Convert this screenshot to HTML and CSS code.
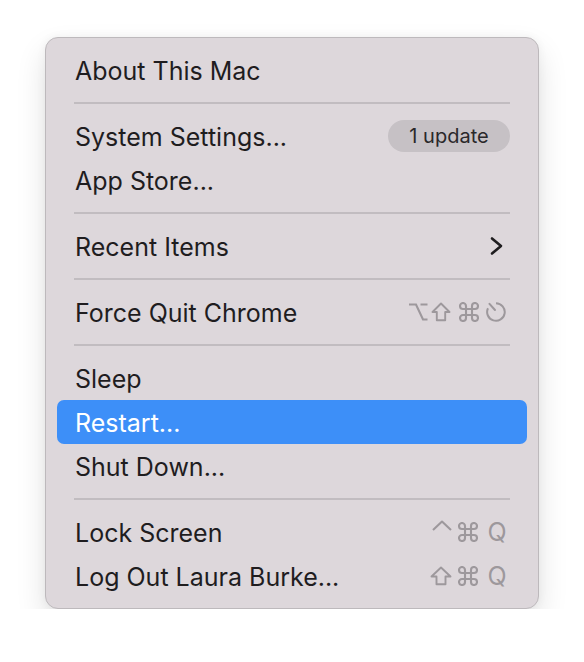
FILE: index.html
```html
<!DOCTYPE html>
<html>
<head>
<meta charset="utf-8">
<link rel="stylesheet" href="styles.css">
</head>
<body>
<div class="menu">
  <div class="item"><span class="label">About This Mac</span></div>
  <div class="sep"></div>
  <div class="item"><span class="label">System Settings...</span><span class="badge">1 update</span></div>
  <div class="item"><span class="label">App Store...</span></div>
  <div class="sep"></div>
  <div class="item"><span class="label">Recent Items</span>
    <svg class="chev" width="14" height="20" viewBox="0 0 14 20"><path d="M3 2.5 L12 10 L3 17.5" fill="none" stroke="#1f1d1f" stroke-width="2.6" stroke-linecap="round" stroke-linejoin="round"/></svg>
  </div>
  <div class="sep"></div>
  <div class="item"><span class="label">Force Quit Chrome</span>
    <span class="keys">
      <svg class="k opt" width="20" height="20" viewBox="0 0 20 20"><path d="M1 2.5 H8 L15 17.5 H19.5 M12.5 2.5 H19.5" fill="none" stroke="currentColor" stroke-width="2.1"/></svg>
      <svg class="k shift fqs" width="20" height="20" viewBox="0 0 20 20"><path d="M10 1.5 L18.5 10 H14.2 V18.3 H5.8 V10 H1.5 Z" fill="none" stroke="currentColor" stroke-width="1.9" stroke-linejoin="round"/></svg>
      <svg class="k cmd fq" width="20" height="20" viewBox="2 2 20 20"><path d="M15 6v12a3 3 0 1 0 3-3H6a3 3 0 1 0 3 3V6a3 3 0 1 0-3 3h12a3 3 0 1 0-3-3" fill="none" stroke="currentColor" stroke-width="2.1" stroke-linejoin="round"/></svg>
      <svg class="k rst" width="22" height="20" viewBox="0 0 22 20"><path d="M11 1.2 A8.8 8.8 0 1 1 3 6.2" fill="none" stroke="currentColor" stroke-width="2"/><path d="M4.5 1.8 L10 8" fill="none" stroke="currentColor" stroke-width="2" stroke-linecap="round"/></svg>
    </span>
  </div>
  <div class="sep"></div>
  <div class="item"><span class="label">Sleep</span></div>
  <div class="item active"><span class="label">Restart...</span></div>
  <div class="item"><span class="label">Shut Down...</span></div>
  <div class="sep"></div>
  <div class="item"><span class="label">Lock Screen</span>
    <span class="keys">
      <svg class="k ctrl" width="20" height="20" viewBox="0 0 20 20"><path d="M1 10 L10 1.5 L19 10" fill="none" stroke="currentColor" stroke-width="2.1" stroke-linejoin="round"/></svg>
      <svg class="k cmd" width="20" height="20" viewBox="2 2 20 20"><path d="M15 6v12a3 3 0 1 0 3-3H6a3 3 0 1 0 3 3V6a3 3 0 1 0-3 3h12a3 3 0 1 0-3-3" fill="none" stroke="currentColor" stroke-width="2.1" stroke-linejoin="round"/></svg>
      <span class="q">Q</span>
    </span>
  </div>
  <div class="item"><span class="label">Log Out Laura Burke...</span>
    <span class="keys">
      <svg class="k shift lo" width="22" height="20" viewBox="-1 0 22 20"><path d="M10 1.5 L19.5 10.5 H14.5 V18.3 H5.5 V10.5 H0.5 Z" fill="none" stroke="currentColor" stroke-width="1.9" stroke-linejoin="round"/></svg>
      <svg class="k cmd" width="20" height="20" viewBox="2 2 20 20"><path d="M15 6v12a3 3 0 1 0 3-3H6a3 3 0 1 0 3 3V6a3 3 0 1 0-3 3h12a3 3 0 1 0-3-3" fill="none" stroke="currentColor" stroke-width="2.1" stroke-linejoin="round"/></svg>
      <span class="q">Q</span>
    </span>
  </div>
</div>
</body>
</html>
```
FILE: styles.css
```css
html, body {
  margin: 0;
  background: #ffffff;
}
body {
  padding: 37px 0 0 45px;
  font-family: Inter, "Noto Sans", "Liberation Sans", sans-serif;
}
.menu {
  box-sizing: border-box;
  width: 494px;
  height: 572px;
  background: #ddd7db;
  border: 1px solid #bdb9bc;
  border-radius: 13px;
  box-shadow: 0 14px 30px rgba(0, 0, 0, 0.12), 0 0 10px rgba(0, 0, 0, 0.05);
  padding: 10px 11px 10px 11px;
}
.item {
  height: 44px;
  display: flex;
  align-items: center;
  justify-content: space-between;
  padding: 0 18px 0 18px;
  border-radius: 7px;
  color: #1f1d1f;
  font-size: 25px;
}
.label {
  position: relative;
  top: 1px;
}
.item.active {
  background: #3d8ff8;
  color: #ffffff;
}
.sep {
  height: 2px;
  margin: 10px 17px 10px 17px;
  background: #c1bcc0;
}
.badge {
  height: 32px;
  width: 122px;
  margin-right: -1px;
  border-radius: 16px;
  background: #c6c1c5;
  color: #2a282a;
  font-size: 20px;
  display: flex;
  align-items: center;
  justify-content: center;
}
.chev {
  margin-right: 6px;
}
.keys {
  display: flex;
  align-items: center;
  color: #9d989c;
  margin-right: 2px;
}
.k {
  display: block;
}
.fqs {
  margin-left: 3px;
}
.cmd {
  margin-left: 6px;
}
.cmd.fq {
  margin-left: 8px;
}
.rst {
  margin-left: 6px;
}
.ctrl {
  margin-bottom: 4px;
}
.q {
  font-size: 25px;
  line-height: 20px;
  width: 20px;
  text-align: center;
  margin-left: 9px;
}
```
